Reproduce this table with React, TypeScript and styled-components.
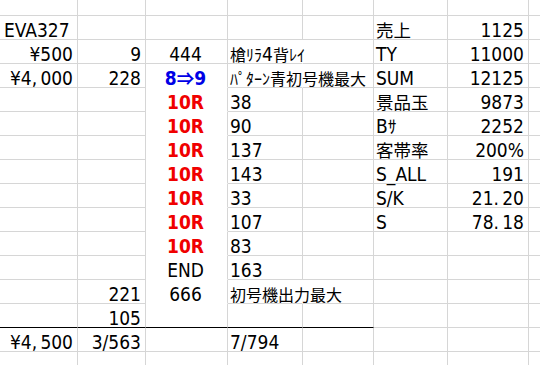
import React from 'react';
import styled, { createGlobalStyle } from 'styled-components';

const Global = createGlobalStyle`
  html, body { margin: 0; padding: 0; background: #ffffff; }
  body { overflow: hidden; }
`;

const COLS = [78, 68, 82, 75, 71, 74, 81, 12];
type Align = 'left' | 'right' | 'center';
const DEFAULT_ALIGN: Align[] = ['right', 'right', 'center', 'left', 'left', 'left', 'right', 'left'];

const Sheet = styled.div`
  display: grid;
  grid-template-columns: ${COLS.map((w) => `${w}px`).join(' ')};
  grid-template-rows: 16px repeat(15, 24px);
  width: 540px;
  height: 365px;
  overflow: hidden;
  font-family: "Liberation Sans Narrow", "DejaVu Sans Condensed", "Noto Sans CJK JP", sans-serif;
  font-size: 19px;
  color: #000000;
`;

const Cell = styled.div<{
  $align: Align;
  $noRight?: boolean;
  $noBottom?: boolean;
  $thick?: boolean;
  $lead?: boolean;
  $compact?: boolean;
}>`
  --jp-size: ${(p) => (p.$compact ? '16px' : '17.5px')};
  box-sizing: border-box;
  border-right: 1px solid ${(p) => (p.$noRight ? 'transparent' : '#d6d6d6')};
  border-bottom: 1px solid ${(p) => (p.$thick ? '#000000' : p.$noBottom ? 'transparent' : '#d6d6d6')};
  padding: 5px 4px 0 ${(p) => (p.$lead ? '4px' : '2px')};
  line-height: 18px;
  white-space: nowrap;
  text-align: ${(p) => p.$align};
`;

const Mark = styled.span<{ $tone: 'red' | 'blue' }>`
  font-weight: 700;
  color: ${(p) => (p.$tone === 'red' ? '#f00000' : '#0000e6')};
`;

const Jp = styled.span`
  font-family: "Noto Sans CJK JP", sans-serif;
  font-size: var(--jp-size);
  line-height: 0;
`;

const Punct = styled.span`
  display: inline-block;
  width: 0.46em;
  text-align: left;
`;

type Spec = { t: string; tone?: 'red' | 'blue'; align?: Align };
type Entry = string | Spec | null;

const R: Spec = { t: '10R', tone: 'red' };

const ROWS: Entry[][] = [
  [],
  [{ t: 'EVA327', align: 'left' }, null, null, null, null, '売上', '1125'],
  ['¥500', '9', '444', '槍ﾘﾗ4背ﾚｲ', null, 'TY', '11000'],
  ['¥4,000', '228', { t: '8⇒9', tone: 'blue' }, 'ﾊﾟﾀｰﾝ青初号機最大', null, 'SUM', '12125'],
  [null, null, R, '38', null, '景品玉', '9873'],
  [null, null, R, '90', null, 'Bｻ', '2252'],
  [null, null, R, '137', null, '客帯率', '200%'],
  [null, null, R, '143', null, 'S_ALL', '191'],
  [null, null, R, '33', null, 'S/K', '21.20'],
  [null, null, R, '107', null, 'S', '78.18'],
  [null, null, R, '83'],
  [null, null, 'END', '163'],
  [null, '221', '666', '初号機出力最大'],
  [null, '105'],
  ['¥4,500', '3/563', null, '7/794'],
  [],
];

const OVERFLOW_ROWS = [2, 3, 12];
const FILLED_C = [3, 4, 5, 6, 7, 8, 9, 10, 11, 12];

const isJp = (c: string) => /[\u2000-\u2BFF\u3000-\u9FFF\uFF00-\uFFEF]/.test(c);
const isPunct = (c: string) => /[.,]/.test(c);

function renderText(s: string): React.ReactNode[] {
  const out: React.ReactNode[] = [];
  let buf = '';
  let jp = '';
  const flushBuf = () => {
    if (buf) { out.push(buf); buf = ''; }
  };
  const flushJp = () => {
    if (jp) { out.push(<Jp key={`j${out.length}`}>{jp}</Jp>); jp = ''; }
  };
  for (const ch of Array.from(s)) {
    if (isJp(ch)) {
      flushBuf();
      jp += ch;
    } else if (isPunct(ch)) {
      flushBuf();
      flushJp();
      out.push(<Punct key={`p${out.length}`}>{ch}</Punct>);
    } else {
      flushJp();
      buf += ch;
    }
  }
  flushBuf();
  flushJp();
  return out;
}

export default function App() {
  return (
    <>
      <Global />
      <Sheet>
        {ROWS.map((row, r) =>
          COLS.map((_, c) => {
            const e = row[c] ?? null;
            const spec: Spec | null = e === null ? null : typeof e === 'string' ? { t: e } : e;
            const align = spec?.align ?? DEFAULT_ALIGN[c];
            const content = spec
              ? spec.tone
                ? <Mark $tone={spec.tone}>{renderText(spec.t)}</Mark>
                : renderText(spec.t)
              : null;
            return (
              <Cell
                key={`${r}-${c}`}
                $align={align}
                $lead={c === 0}
                $compact={c === 3}
                $noRight={c === 3 && OVERFLOW_ROWS.includes(r)}
                $noBottom={c === 2 && FILLED_C.includes(r)}
                $thick={r === 13 && c <= 4}
              >
                {content}
              </Cell>
            );
          })
        )}
      </Sheet>
    </>
  );
}
